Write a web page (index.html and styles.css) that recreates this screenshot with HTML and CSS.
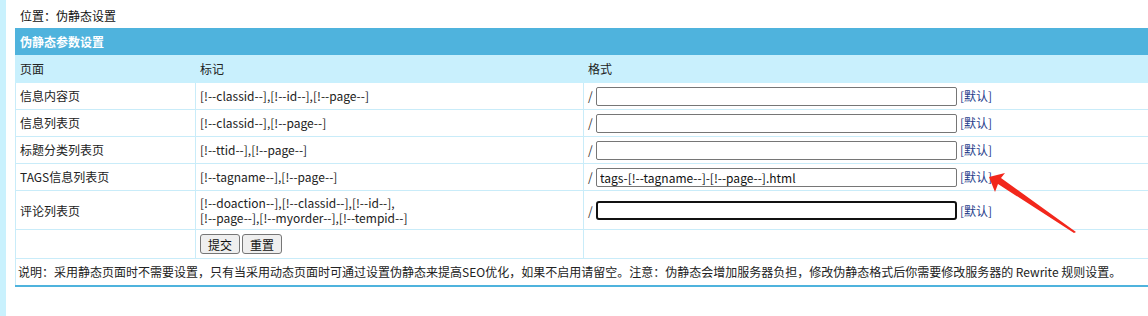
FILE: index.html
```html
<!DOCTYPE html>
<html>
<head>
<meta charset="utf-8">
<title>伪静态设置</title>
<link rel="stylesheet" href="styles.css">
</head>
<body>
<div class="page">
  <div class="strip"></div>
  <div class="main">
    <div class="position">位置：伪静态设置</div>
    <table class="settings">
      <colgroup>
        <col class="c1">
        <col class="c2">
        <col class="c3">
      </colgroup>
      <tr class="header"><td colspan="3">伪静态参数设置</td></tr>
      <tr class="subhead"><td>页面</td><td>标记</td><td>格式</td></tr>
      <tr class="row"><td>信息内容页</td><td>[!--classid--],[!--id--],[!--page--]</td><td><div class="fmt"><span class="slash">/</span><input class="field" type="text" value=""><a class="def" href="#">[默认]</a></div></td></tr>
      <tr class="row"><td>信息列表页</td><td>[!--classid--],[!--page--]</td><td><div class="fmt"><span class="slash">/</span><input class="field" type="text" value=""><a class="def" href="#">[默认]</a></div></td></tr>
      <tr class="row"><td>标题分类列表页</td><td>[!--ttid--],[!--page--]</td><td><div class="fmt"><span class="slash">/</span><input class="field" type="text" value=""><a class="def" href="#">[默认]</a></div></td></tr>
      <tr class="row"><td>TAGS信息列表页</td><td>[!--tagname--],[!--page--]</td><td><div class="fmt"><span class="slash">/</span><input class="field" type="text" value="tags-[!--tagname--]-[!--page--].html"><a class="def" href="#">[默认]</a></div></td></tr>
      <tr class="row tall"><td>评论列表页</td><td>[!--doaction--],[!--classid--],[!--id--],<br>[!--page--],[!--myorder--],[!--tempid--]</td><td><div class="fmt"><span class="slash">/</span><input class="field focused" type="text" value=""><a class="def" href="#">[默认]</a></div></td></tr>
      <tr class="btnrow"><td></td><td><div class="btns"><button class="btn" type="button">提交</button><button class="btn" type="button">重置</button></div></td><td></td></tr>
      <tr class="note"><td colspan="3">说明：采用静态页面时不需要设置，只有当采用动态页面时可通过设置伪静态来提高SEO优化，如果不启用请留空。注意：伪静态会增加服务器负担，修改伪静态格式后你需要修改服务器的 Rewrite 规则设置。</td></tr>
    </table>
  </div>
</div>
<svg class="arrow" width="110" height="80" viewBox="0 0 110 80">
  <polygon fill="#f2271c" points="0,17 16,13 12,18 87,72 85,73 9,24 6,32"/>
</svg>
</body>
</html>
```
FILE: styles.css
```css
html, body {
  margin: 0;
  padding: 0;
  background: #ffffff;
  overflow: hidden;
}
body {
  font-family: "Noto Sans CJK SC", "Noto Sans", sans-serif;
  font-size: 12px;
  color: #222222;
  position: relative;
  width: 1148px;
  height: 316px;
}
.page {
  display: flex;
  height: 316px;
}
.strip {
  width: 6px;
  flex: none;
  background: #c9f1fd;
}
.main {
  padding-left: 9px;
  flex: none;
}
.position {
  height: 28px;
  line-height: 20px;
  padding: 6px 0 0 5px;
  box-sizing: border-box;
  color: #111111;
}
.settings {
  width: 1150px;
  border-collapse: collapse;
  table-layout: fixed;
  border-top: 1px solid #4fb3dd;
  border-left: 1px solid #4fb3dd;
  border-bottom: 2px solid #4fb3dd;
}
.c1 { width: 180px; }
.c2 { width: 388px; }
.c3 { width: auto; }
.settings td {
  border: 1px solid #c9ecf9;
  padding: 0 3px 0 4px;
  height: 26px;
  vertical-align: middle;
  line-height: 14px;
}
.settings tr.header td {
  background: #4fb3dd;
  color: #ffffff;
  font-weight: bold;
  border: none;
  height: 26px;
}
.settings tr.subhead td {
  background: #c9f0fd;
  border-color: #c9f0fd;
  height: 26px;
}
.settings tr.subhead td + td {
  border-left-color: #c9f0fd;
}
.settings tr.tall td {
  height: 38px;
  line-height: 15px;
}
.settings tr.btnrow td {
  height: 28px;
}
.settings tr.note td {
  height: 26px;
  padding-left: 2px;
}
.fmt {
  display: flex;
  align-items: center;
}
.slash {
  width: 8px;
  color: #333333;
}
.field {
  width: 361px;
  height: 19px;
  box-sizing: border-box;
  border: 1px solid #767676;
  border-radius: 2px;
  padding: 0 3px;
  margin: 0 3px 0 0;
  font-family: inherit;
  font-size: 12px;
  color: #111111;
  background: #ffffff;
  outline: none;
}
.field.focused {
  border: 2px solid #111111;
  border-radius: 3px;
}
.def {
  color: #27408b;
  text-decoration: none;
}
.btns {
  display: flex;
  gap: 2px;
}
.btn {
  width: 40px;
  height: 20px;
  box-sizing: border-box;
  border: 1px solid #767676;
  border-radius: 3px;
  background: #efefef;
  font-family: inherit;
  font-size: 12px;
  color: #111111;
  padding: 0;
}
.arrow {
  position: absolute;
  left: 989px;
  top: 160px;
}
```
